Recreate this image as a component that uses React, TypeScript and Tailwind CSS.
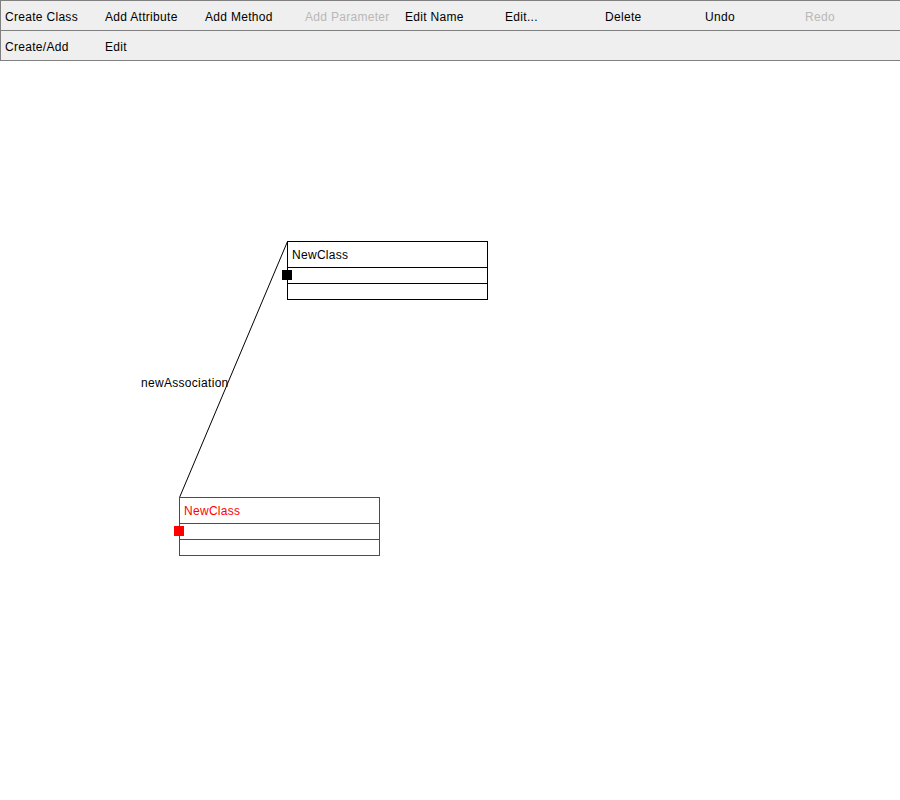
const topActions = [
  { label: 'Create Class', enabled: true },
  { label: 'Add Attribute', enabled: true },
  { label: 'Add Method', enabled: true },
  { label: 'Add Parameter', enabled: false },
  { label: 'Edit Name', enabled: true },
  { label: 'Edit...', enabled: true },
  { label: 'Delete', enabled: true },
  { label: 'Undo', enabled: true },
  { label: 'Redo', enabled: false },
];

const modes = ['Create/Add', 'Edit'];

function ClassBox({ name, selected, className }: { name: string; selected?: boolean; className: string }) {
  const line = selected ? 'border-[#ff0000]' : 'border-black';
  return (
    <div className={`absolute w-[201px] border bg-white ${line} ${className}`}>
      <div className={`h-[26px] flex items-center pl-[4px] pt-[1px] border-b ${line} ${selected ? 'text-[#ff0000]' : 'text-black'}`}>
        {name}
      </div>
      <div className={`h-[16px] border-b ${line}`} />
      <div className="h-[15px]" />
      {/* resize handle on the left edge */}
      <div className={`absolute left-[-6px] top-[28px] w-[10px] h-[10px] ${selected ? 'bg-[#ff0000]' : 'bg-black'}`} />
    </div>
  );
}

export default function App() {
  return (
    <div className="w-[900px] h-[800px] bg-white overflow-hidden text-[12px] tracking-[0.3px] text-black" style={{ fontFamily: '"Liberation Sans", Arial, sans-serif' }}>
      {/* Toolbar */}
      <div className="border-t border-l border-[#808080] bg-[#efefef] w-[901px]">
        <div className="flex h-[30px] border-b border-[#808080]">
          {topActions.map(a => (
            <div key={a.label} className={`w-[100px] shrink-0 pl-[4px] pt-[2px] flex items-center ${a.enabled ? 'text-black' : 'text-[#b8b8b8]'}`}>
              {a.label}
            </div>
          ))}
        </div>
        <div className="flex h-[30px] border-b border-[#808080]">
          {modes.map(m => (
            <div key={m} className="w-[100px] shrink-0 pl-[4px] pt-[2px] flex items-center">
              {m}
            </div>
          ))}
        </div>
      </div>

      {/* Diagram canvas */}
      <div className="relative h-[739px]">
        <svg className="absolute inset-0" width="900" height="739">
          <line x1="287.5" y1="180.5" x2="179.5" y2="436.5" stroke="black" strokeWidth="1" />
        </svg>
        <div className="absolute left-[141px] top-[315px] leading-[14px]">newAssociation</div>
        <ClassBox name="NewClass" className="left-[287px] top-[180px]" />
        <ClassBox name="NewClass" selected className="left-[179px] top-[436px]" />
      </div>
    </div>
  );
}
